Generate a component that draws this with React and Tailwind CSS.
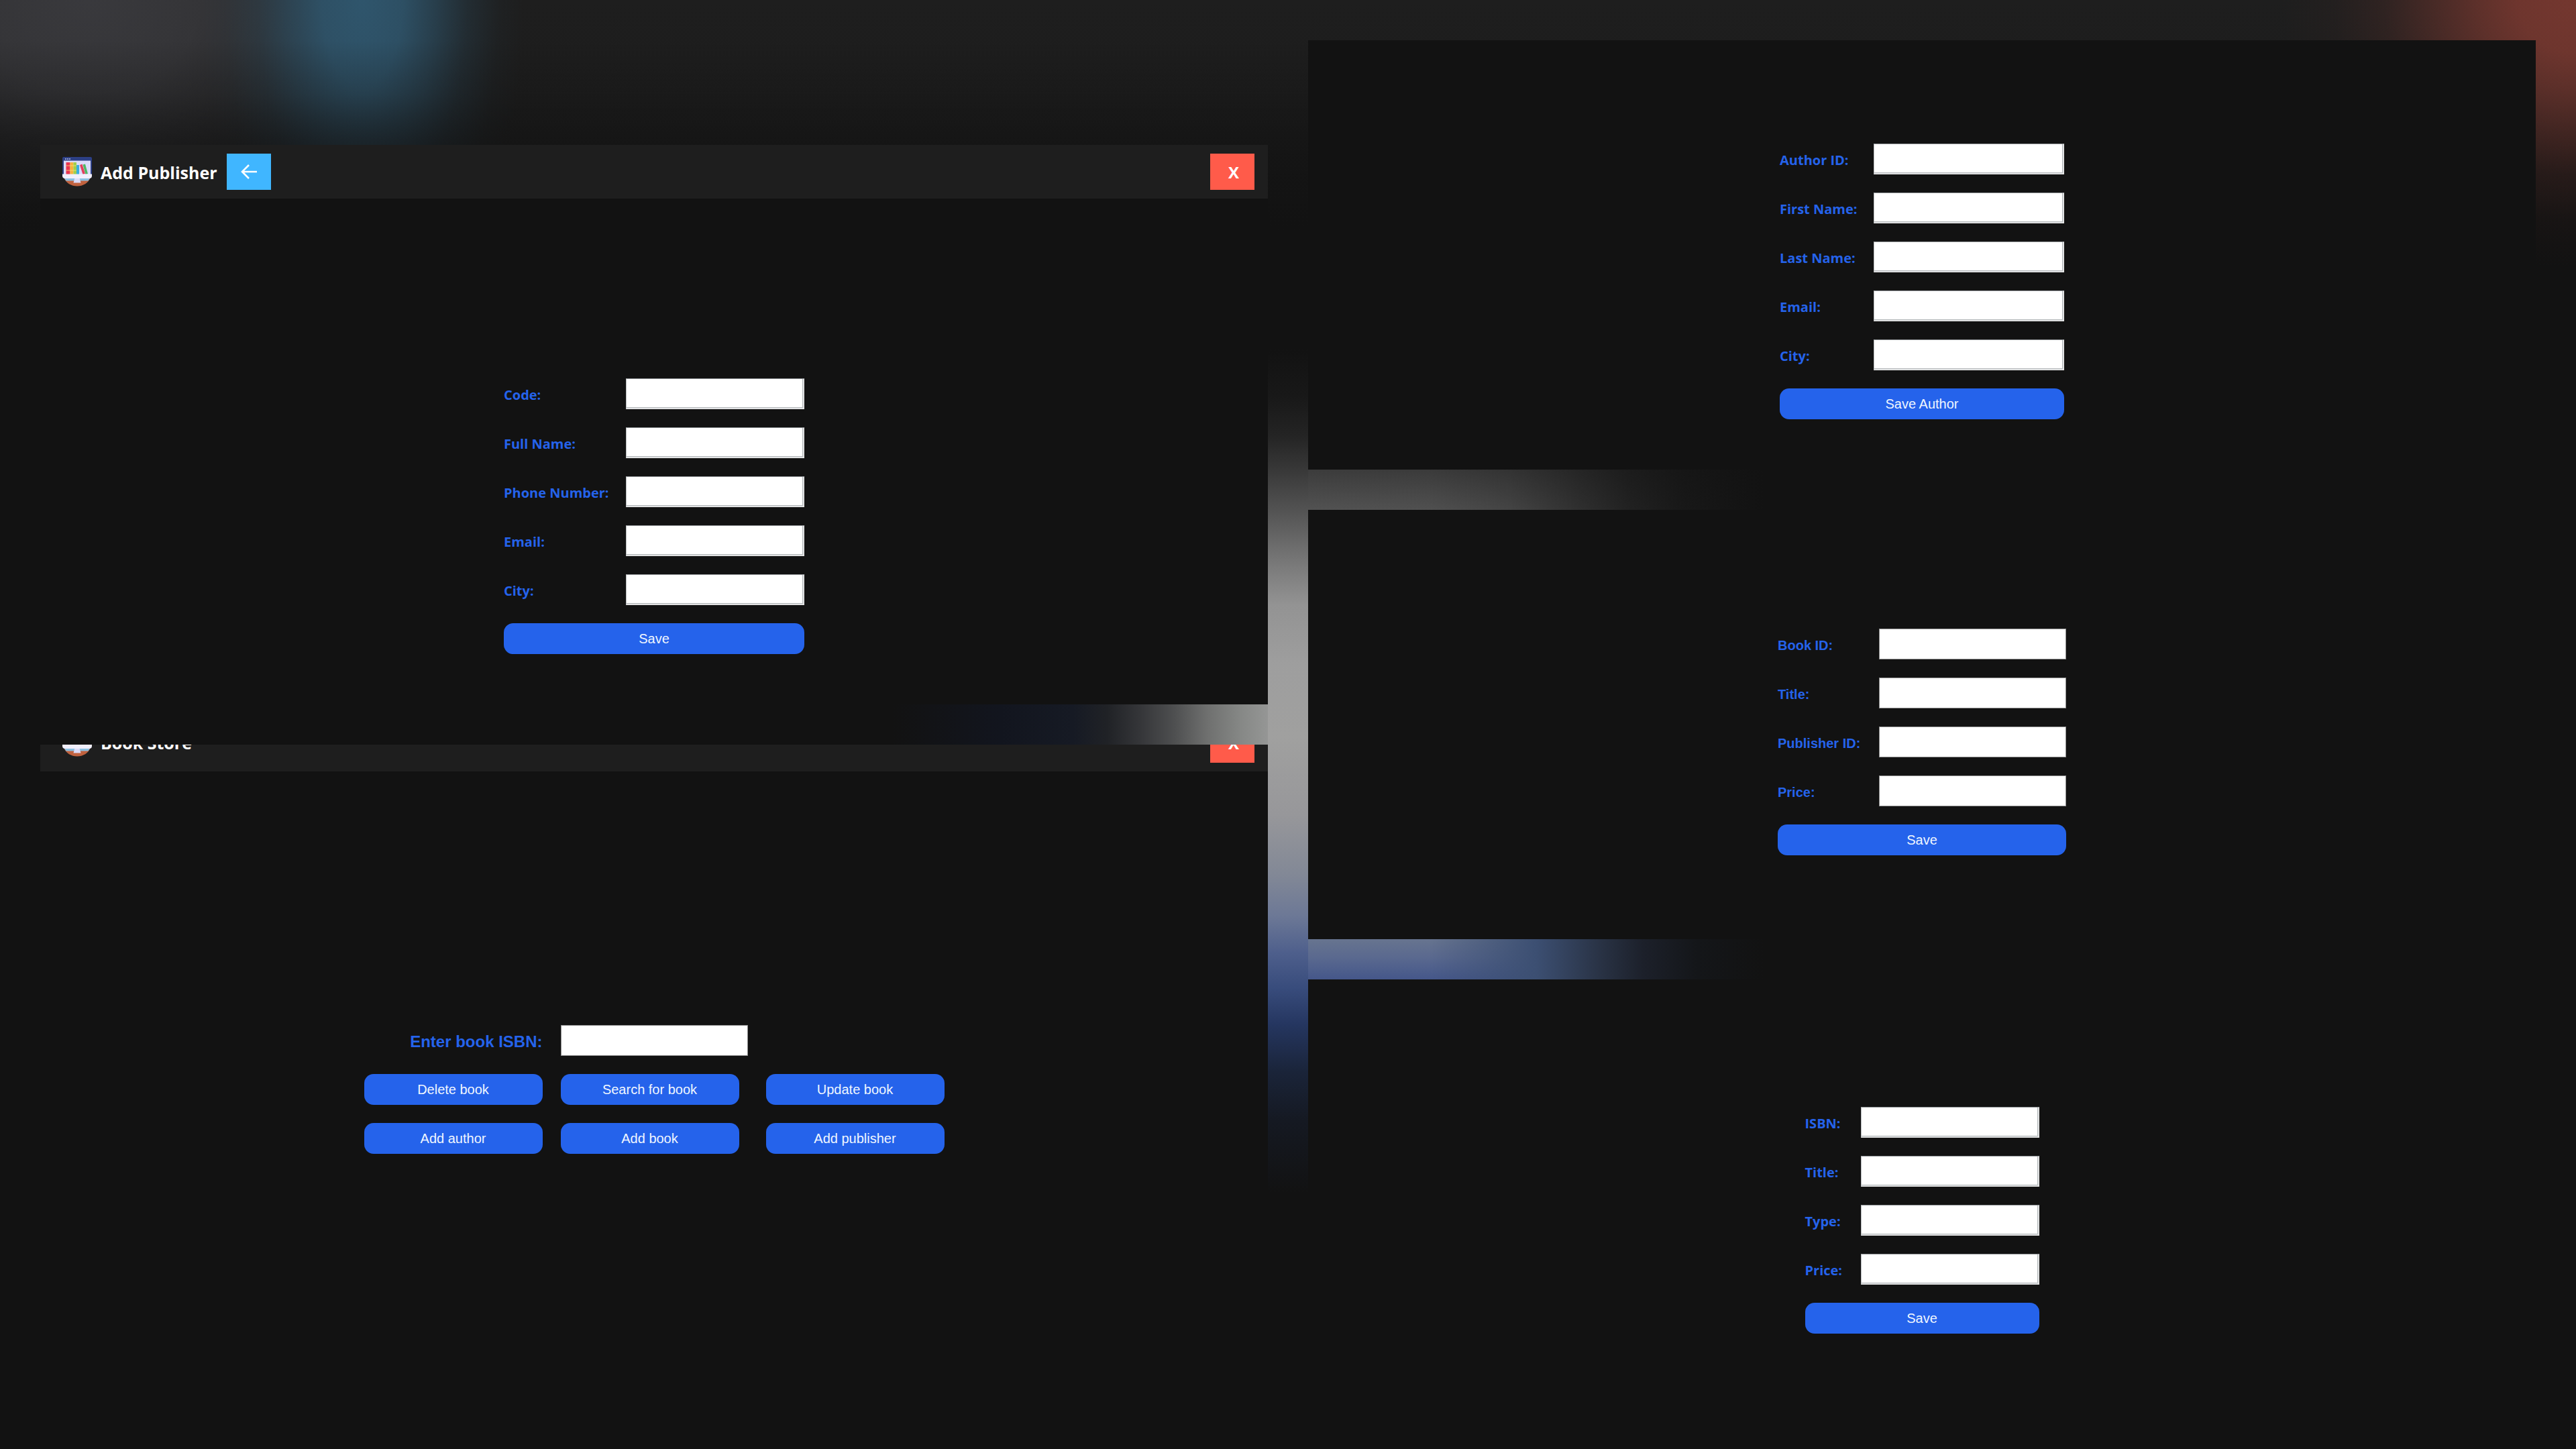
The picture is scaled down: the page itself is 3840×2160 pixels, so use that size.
import React, { useId } from "react";

const SEGOE = "font-['Open_Sans',sans-serif]";
const ARIAL = "font-['Liberation_Sans',Arial,sans-serif]";

function StoreIcon() {
  return (
    <svg viewBox="0 0 44 44" className="size-11 shrink-0" aria-hidden="true">
      <path d="M2 30C8 48 36 48 42 30z" fill="#c0623f" />
      <path d="M2 30q1.500 3 3.500 5.500h33Q40.500 33 42 30z" fill="#8cbfe0" />
      <path d="M18.500 31h7l2 7.500h-11z" fill="#dcdcf8" />
      <rect x="0" y="0" width="44" height="29" rx="2" fill="#2c3f85" />
      <rect x="2" y="5.500" width="40" height="22" fill="#dcdcfa" />
      <circle cx="5" cy="3" r="0.900" fill="#c8cdea" />
      <circle cx="8" cy="3" r="0.900" fill="#c8cdea" />
      <circle cx="11" cy="3" r="0.900" fill="#c8cdea" />
      <rect x="5.500" y="8" width="6" height="18" fill="#ea3450" />
      <rect x="11.500" y="8" width="5" height="18" fill="#f7b23c" />
      <rect x="16.500" y="8" width="4.500" height="18" fill="#a0cf4a" />
      <rect x="21" y="12" width="4" height="14" fill="#37aee0" />
      <path d="M26 12l3.500-1.500L34 25l-3.500 1z" fill="#e2405c" />
      <path d="M30.500 11.500l3.500-1L38 25l-3.500 1z" fill="#4fb866" />
      <path d="M5.500 13H21M5.500 20H21" stroke="#f6e27a" strokeWidth="0.800" />
      <path d="M0 25.500h44v2.500a4 4 0 0 1-4 4H4a4 4 0 0 1-4-4z" fill="#f1effc" />
    </svg>
  );
}

function TitleBar({ title, back }) {
  return (
    <header
      className={`flex h-20 shrink-0 items-center bg-[#1e1e1e] pr-5 pl-[33px] text-white ${SEGOE}`}
    >
      <div className={`flex items-center gap-[13px] ${back ? "" : "pb-2"}`}>
        <StoreIcon />
        <h1 className="pt-0.5 text-[25px] leading-8 font-bold">{title}</h1>
      </div>
      {back && (
        <button
          type="button"
          aria-label="Back"
          className="ml-3.5 flex h-[54px] w-[66px] items-center justify-center bg-[#40b6ff]"
        >
          <svg viewBox="0 0 24 22" className="h-[22px] w-6" fill="none" stroke="#fff" strokeWidth="2.6">
            <path d="M12 1 2 11l10 10M2 11h22" />
          </svg>
        </button>
      )}
      <button
        type="button"
        aria-label="Close"
        className={`ml-auto h-[54px] w-[66px] bg-[#ff5b4a] pl-1 text-2xl leading-8 font-bold ${back ? "pt-0.5" : "pb-1"}`}
      >
        X
      </button>
    </header>
  );
}

function TextBox({ id, beveled }) {
  return (
    <input
      id={id}
      type="text"
      className={
        beveled
          ? "h-[46px] w-full border border-t-[#8f9396] border-l-[#b9bcbe] border-r-[#e8e8e8] border-b-[#e8e8e8] bg-white px-2 text-xl text-black outline-none shadow-[inset_-1px_-1px_0_#dcdee0,inset_-2px_-2px_0_#b4b8ba]"
          : "h-[46px] w-full border border-[#8a8a8a] bg-white px-2 text-xl text-black outline-none"
      }
    />
  );
}

function ActionButton({ children, className = "" }) {
  return (
    <button
      type="button"
      className={`h-[46px] rounded-[14px] bg-[#2563eb] text-xl text-blue-50 ${ARIAL} ${className}`}
    >
      {children}
    </button>
  );
}

function Form({ fields, action, columns, arial }) {
  const base = useId();
  return (
    <form className={`mx-auto grid w-fit items-center gap-y-[27px] ${columns}`}>
      {fields.map((f) => (
        <React.Fragment key={f}>
          <label
            htmlFor={base + f}
            className={`pt-[3px] text-xl leading-7 font-bold whitespace-nowrap text-[#2563eb] ${arial ? ARIAL : SEGOE}`}
          >
            {f}:
          </label>
          <TextBox id={base + f} beveled={!arial} />
        </React.Fragment>
      ))}
      <ActionButton className="col-span-2">{action}</ActionButton>
    </form>
  );
}

export default function App() {
  return (
    <div className="flex min-h-screen bg-[#121212] px-[60px] [background-image:radial-gradient(ellipse_440px_400px_at_100%_0,rgb(116_55_47),rgb(116_55_47/.93)_20%,rgb(116_55_47/.74)_33%,rgb(116_55_47/.45)_50%,rgb(116_55_47/.2)_65%,rgb(116_55_47/.06)_82%,transparent),linear-gradient(transparent_60px,rgb(18_18_18/.25)_140px,rgb(18_18_18/.6)_210px,rgb(18_18_18)_350px),radial-gradient(ellipse_240px_520px_at_540px_0,rgb(48_88_112/.95),rgb(48_88_112/.85)_25%,rgb(48_88_112/.55)_46%,rgb(48_88_112/.25)_65%,rgb(48_88_112/.06)_85%,transparent),radial-gradient(ellipse_480px_400px_at_130px_0,rgb(60_60_64/.9),rgb(60_60_64/.75)_35%,rgb(60_60_64/.4)_62%,rgb(60_60_64/.1)_85%,transparent),linear-gradient(#1e1e1e,#1d1d1d_100px,#191919_300px,#121212_350px)]">
      <div className="flex min-w-0 flex-1 flex-col pt-[216px]">
        <section className="bg-[#121212] pb-[75px]">
          <TitleBar title="Add Publisher" back />
          <div className="pt-[268px]">
            <Form
              fields={["Code", "Full Name", "Phone Number", "Email", "City"]}
              action="Save"
              columns="grid-cols-[182px_266px]"
            />
          </div>
        </section>

        <div className="h-[60px] shrink-0 bg-[linear-gradient(to_left,#959695,#868886_40px,#6f706f_90px,#4e4f50_140px,#353639_190px,#202226_240px,#161a24_290px,#12151e_400px,#121212_560px)]" />

        <section className="flex flex-1 flex-col bg-[#121212]">
          {/* The title bar is scrolled half out of view. */}
          <div className="flex h-10 flex-col justify-end overflow-hidden">
            <TitleBar title="Book Store" />
          </div>
          <form className="mx-auto mt-[378px] grid w-fit grid-cols-[266px_279px_266px] items-center gap-[27px]">
            <label
              htmlFor="isbn"
              className={`pt-[3px] text-right text-2xl leading-7 font-bold whitespace-nowrap text-[#2563eb] ${ARIAL}`}
            >
              Enter book ISBN:
            </label>
            <TextBox id="isbn" />
            <span />
            <ActionButton>Delete book</ActionButton>
            <ActionButton className="w-[266px]">Search for book</ActionButton>
            <ActionButton>Update book</ActionButton>
            <ActionButton>Add author</ActionButton>
            <ActionButton className="w-[266px]">Add book</ActionButton>
            <ActionButton>Add publisher</ActionButton>
          </form>
        </section>
      </div>

      <div className="w-[60px] shrink-0 bg-[linear-gradient(transparent_480px,#121212_520px,#181818_590px,#242424_650px,#3a3a3a_705px,#565656_768px,#787878_839px,#939393_902px,#9e9e9e_991px,#a0a09f_1100px,#97979a_1214px,#828896_1304px,#6c7896_1366px,#4e5f8c_1420px,#384c7c_1473px,#253660_1527px,#1a2439_1598px,#151922_1670px,#121212_1780px)]" />

      <div className="flex min-w-0 flex-1 flex-col pt-[60px]">
        <section className="bg-[#121212] pt-[154px] pb-[75px]">
          <Form
            fields={["Author ID", "First Name", "Last Name", "Email", "City"]}
            action="Save Author"
            columns="grid-cols-[140px_284px]"
          />
        </section>

        <div className="h-[60px] shrink-0 [background-image:linear-gradient(rgb(18_18_18/.35),transparent),linear-gradient(to_right,#525252,#505050_180px,#444_300px,#303030_400px,#212121_480px,#181818_560px,#121212_680px)]" />

        <section className="bg-[#121212] pt-[177px] pb-[125px]">
          <Form
            fields={["Book ID", "Title", "Publisher ID", "Price"]}
            action="Save"
            columns="grid-cols-[151px_279px]"
            arial
          />
        </section>

        <div className="h-[60px] shrink-0 [background-image:linear-gradient(to_right,rgb(60_79_114/0)_180px,#3c4f72_340px,#2a3447_430px,#1c202a_500px,#141619_580px,#121212_680px),linear-gradient(#67748f,#5a698f_45%,#45578a)]" />

        <section className="flex-1 bg-[#121212] pt-[190px] pb-20">
          <Form
            fields={["ISBN", "Title", "Type", "Price"]}
            action="Save"
            columns="grid-cols-[83px_266px]"
          />
        </section>
      </div>
    </div>
  );
}
